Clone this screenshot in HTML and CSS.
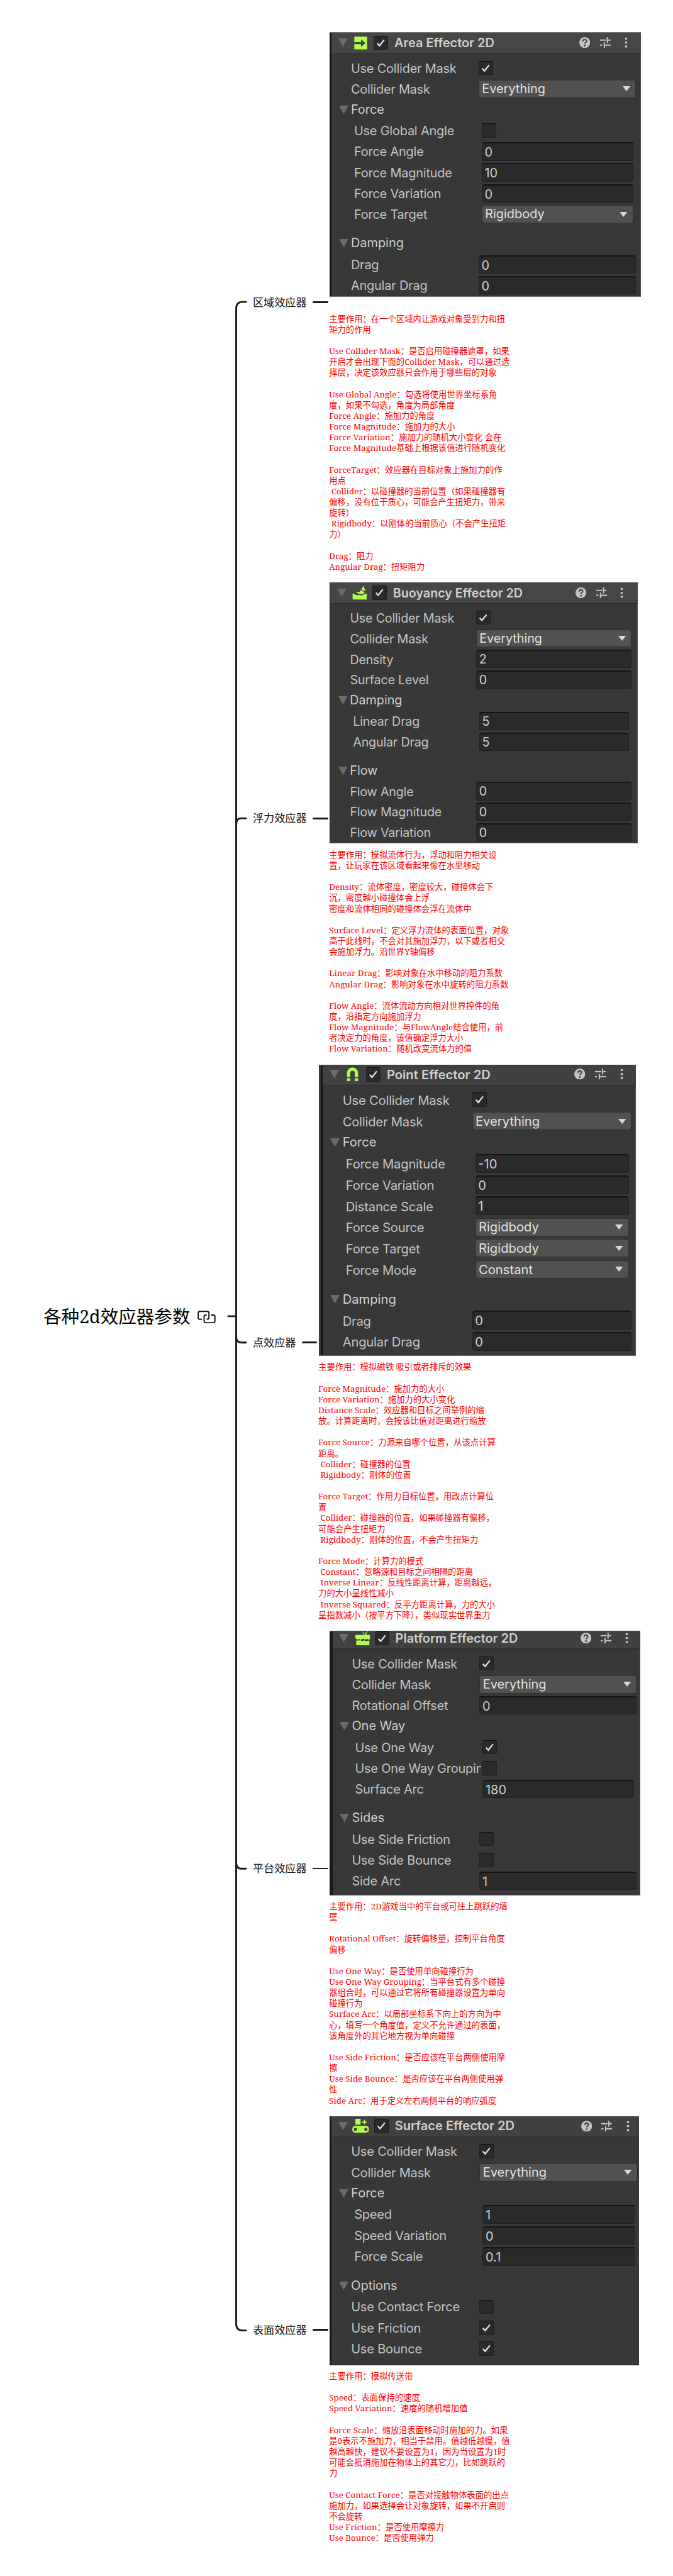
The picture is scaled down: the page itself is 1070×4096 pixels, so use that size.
FILE: index.html
```html
<!DOCTYPE html>
<html lang="zh-CN">
<head>
<meta charset="utf-8">
<title>各种2d效应器参数</title>
<link rel="stylesheet" href="styles.css">
</head>
<body>
<svg class="defs" width="0" height="0">
  <symbol id="check" viewBox="0 0 14 14"><path d="M3.2 7.2 5.6 9.9 10.6 3.6" fill="none" stroke="#e6e6e6" stroke-width="1.5"/></symbol>
  <symbol id="help" viewBox="0 0 10 10"><circle cx="5" cy="5" r="5" fill="#c4c4c4"/><path d="M3.4 3.9C3.4 1.6 6.7 1.7 6.7 3.7 6.7 4.8 5.1 4.8 5.1 6.1" fill="none" stroke="#414141" stroke-width="1.2"/><circle cx="5.1" cy="7.8" r=".8" fill="#414141"/></symbol>
  <symbol id="sliders" viewBox="0 0 10 10"><path d="M0 2.8H5.6M6.8 0V5.4M6.8 2.8H9.6M0 7.4H2M4 4.8V10M4 7.4H10" fill="none" stroke="#c4c4c4" stroke-width="1.2"/></symbol>
  <symbol id="dots" viewBox="0 0 3 10"><path d="M.5 .2h2v2h-2zM.5 4h2v2h-2zM.5 7.8h2v2h-2z" fill="#c4c4c4"/></symbol>
  <symbol id="area" viewBox="0 0 16 16"><rect x="2" y="2" width="12.2" height="12.2" rx=".6" fill="#b0ff4f"/><path d="M2 7.2H8.4V4.6L12.8 8.2 8.4 11.8V9.2H2z" fill="#3f4a35"/></symbol>
  <symbol id="buoy" viewBox="0 0 16 16"><path d="M11.3 1.4 13.5 6.2 9.3 5.8zM8.2 6 12.6 7.4 11.2 9.4Q7.2 9.6 4.4 8.2L6 7.2 8 7.6zM1 8.8 2.8 9.6Q5 11.4 7.4 10.2 10.6 11.6 12.4 9.4L14.6 9.2V14.8H1z" fill="#b0ff4f"/></symbol>
  <symbol id="magnet" viewBox="0 0 16 16"><path d="M4.3 10.4V6.6A3.7 3.7 0 0 1 11.7 6.6V10.4" fill="none" stroke="#b0ff4f" stroke-width="3"/><path d="M2.8 11.6h3v2.6h-3zM10.2 11.6h3v2.6h-3z" fill="#b0ff4f"/></symbol>
  <symbol id="platform" viewBox="0 0 16 16"><path d="M10.4 5 9 1.6M11.5 5 13.4 .8M11.4 5V2" stroke="#86bd45" stroke-width="1" fill="none"/><path d="M1.8 4.6H16V8.2L14.6 9.2 13 8.4 10.8 9 9 8.2 7.2 9.4 5 8.4 3.6 9.4 1.8 7.6zM2.6 10H5L6.6 9.6 8 10.6 10 9.8 12 10.6 15.2 10V14.4H2.6z" fill="#b0ff4f"/></symbol>
  <symbol id="surface" viewBox="0 0 16 16"><rect x="3" y="1.2" width="5" height="5.6" fill="#b0ff4f"/><path d="M9.3 3.7H11.2V2L13.8 4.3 11.2 6.6V4.9H9.3z" fill="#b0ff4f"/><rect y="8" width="16" height="6.4" rx="3" fill="#b0ff4f"/><circle cx="3" cy="11.2" r="1.5" fill="#3e3e3e"/><circle cx="13" cy="11.2" r="1.5" fill="#3e3e3e"/></symbol>
  <symbol id="tri" viewBox="0 0 9 8" preserveAspectRatio="none"><path d="M0 0H9L4.5 8z" fill="currentColor"/></symbol>
</svg>
<main class="map">
  <h1 class="root">各种2d效应器参数
    <svg class="root-link" viewBox="0 0 30 21"><path d="M7.4 14.2H3.6Q1.2 14.2 1.2 11.6V3.8Q1.2 1.2 3.8 1.2H16.4Q18.8 1.2 18.8 3.8V11.6Q18.8 14 16.6 14H15M22.4 7.2H26.2Q28.7 7.2 28.7 9.6V17.2Q28.7 19.8 26.2 19.8H13.4Q10.8 19.8 10.8 17.2V9.8Q10.8 7.2 13 7.2H15" fill="none" stroke="#111" stroke-width="2"/></svg>
  </h1>
  <svg class="trunk" viewBox="0 0 34 4096"><path d="M2 2092.9H14.5M30 480.1H24.5Q14.5 480.1 14.5 491V3695Q14.5 3705.6 24.5 3705.6H30M14.5 1311Q14.5 1301.1 23 1301.1H30M14.5 2125Q14.5 2134.8 23 2134.8H30M14.5 2961.4Q14.5 2971.3 23 2971.3H30"/></svg>
  <div class="branches">

    <section class="branch">
      <h2>区域效应器</h2><i class="link"></i>
      <div class="topic">
        <div class="panel p-area">
          <header><svg class="tri"><use href="#tri"/></svg><svg class="ico"><use href="#area"/></svg><b class="chk"><svg><use href="#check"/></svg></b><h3>Area Effector 2D</h3><svg class="help"><use href="#help"/></svg><svg class="sld"><use href="#sliders"/></svg><svg class="dots"><use href="#dots"/></svg></header>
          <div class="row"><label>Use Collider Mask</label><b class="chk"><svg><use href="#check"/></svg></b></div>
          <div class="row"><label>Collider Mask</label><div class="drop">Everything<svg><use href="#tri"/></svg></div></div>
          <div class="group"><svg class="tri"><use href="#tri"/></svg>Force</div>
          <div class="row in"><label>Use Global Angle</label><b class="chk"></b></div>
          <div class="row in"><label>Force Angle</label><div class="field">0</div></div>
          <div class="row in"><label>Force Magnitude</label><div class="field">10</div></div>
          <div class="row in"><label>Force Variation</label><div class="field">0</div></div>
          <div class="row in"><label>Force Target</label><div class="drop">Rigidbody<svg><use href="#tri"/></svg></div></div>
          <div class="group gap"><svg class="tri"><use href="#tri"/></svg>Damping</div>
          <div class="row"><label>Drag</label><div class="field">0</div></div>
          <div class="row"><label>Angular Drag</label><div class="field">0</div></div>
        </div>
        <div class="note">
主要作用：在一个区域内让游戏对象受到力和扭
矩力的作用

Use Collider Mask：是否启用碰撞器遮罩，如果
开启才会出现下面的Collider Mask，可以通过选
择层，决定该效应器只会作用于哪些层的对象

Use Global Angle：勾选将使用世界坐标系角
度，如果不勾选，角度为局部角度
Force Angle：施加力的角度
Force Magnitude：施加力的大小
Force Variation：施加力的随机大小变化 会在
Force Magnitude基础上根据该值进行随机变化

ForceTarget：效应器在目标对象上施加力的作
用点
 Collider：以碰撞器的当前位置（如果碰撞器有
偏移，没有位于质心，可能会产生扭矩力，带来
旋转）
 Rigidbody：以刚体的当前质心（不会产生扭矩
力）

Drag：阻力
Angular Drag：扭矩阻力</div>
      </div>
    </section>

    <section class="branch">
      <h2>浮力效应器</h2><i class="link"></i>
      <div class="topic">
        <div class="panel p-buoy">
          <header><svg class="tri"><use href="#tri"/></svg><svg class="ico"><use href="#buoy"/></svg><b class="chk"><svg><use href="#check"/></svg></b><h3>Buoyancy Effector 2D</h3><svg class="help"><use href="#help"/></svg><svg class="sld"><use href="#sliders"/></svg><svg class="dots"><use href="#dots"/></svg></header>
          <div class="row"><label>Use Collider Mask</label><b class="chk"><svg><use href="#check"/></svg></b></div>
          <div class="row"><label>Collider Mask</label><div class="drop">Everything<svg><use href="#tri"/></svg></div></div>
          <div class="row"><label>Density</label><div class="field">2</div></div>
          <div class="row"><label>Surface Level</label><div class="field">0</div></div>
          <div class="group"><svg class="tri"><use href="#tri"/></svg>Damping</div>
          <div class="row in"><label>Linear Drag</label><div class="field">5</div></div>
          <div class="row in"><label>Angular Drag</label><div class="field">5</div></div>
          <div class="group gap"><svg class="tri"><use href="#tri"/></svg>Flow</div>
          <div class="row"><label>Flow Angle</label><div class="field">0</div></div>
          <div class="row"><label>Flow Magnitude</label><div class="field">0</div></div>
          <div class="row"><label>Flow Variation</label><div class="field">0</div></div>
        </div>
        <div class="note">主要作用：模拟流体行为，浮动和阻力相关设
置，让玩家在该区域看起来像在水里移动

Density：流体密度，密度较大，碰撞体会下
沉，密度越小碰撞体会上浮
密度和流体相同的碰撞体会浮在流体中

Surface Level：定义浮力流体的表面位置，对象
高于此线时，不会对其施加浮力，以下或者相交
会施加浮力。沿世界Y轴偏移

Linear Drag：影响对象在水中移动的阻力系数
Angular Drag：影响对象在水中旋转的阻力系数

Flow Angle：流体流动方向相对世界控件的角
度，沿指定方向施加浮力
Flow Magnitude：与FlowAngle结合使用，前
者决定力的角度，该值确定浮力大小
Flow Variation：随机改变流体力的值</div>
      </div>
    </section>

    <section class="branch">
      <h2>点效应器</h2><i class="link"></i>
      <div class="topic">
        <div class="panel p-point">
          <header><svg class="tri"><use href="#tri"/></svg><svg class="ico"><use href="#magnet"/></svg><b class="chk"><svg><use href="#check"/></svg></b><h3>Point Effector 2D</h3><svg class="help"><use href="#help"/></svg><svg class="sld"><use href="#sliders"/></svg><svg class="dots"><use href="#dots"/></svg></header>
          <div class="row"><label>Use Collider Mask</label><b class="chk"><svg><use href="#check"/></svg></b></div>
          <div class="row"><label>Collider Mask</label><div class="drop">Everything<svg><use href="#tri"/></svg></div></div>
          <div class="group"><svg class="tri"><use href="#tri"/></svg>Force</div>
          <div class="row in"><label>Force Magnitude</label><div class="field">-10</div></div>
          <div class="row in"><label>Force Variation</label><div class="field">0</div></div>
          <div class="row in"><label>Distance Scale</label><div class="field">1</div></div>
          <div class="row in"><label>Force Source</label><div class="drop">Rigidbody<svg><use href="#tri"/></svg></div></div>
          <div class="row in"><label>Force Target</label><div class="drop">Rigidbody<svg><use href="#tri"/></svg></div></div>
          <div class="row in"><label>Force Mode</label><div class="drop">Constant<svg><use href="#tri"/></svg></div></div>
          <div class="group gap"><svg class="tri"><use href="#tri"/></svg>Damping</div>
          <div class="row"><label>Drag</label><div class="field">0</div></div>
          <div class="row"><label>Angular Drag</label><div class="field">0</div></div>
        </div>
        <div class="note">主要作用：模拟磁铁 吸引或者排斥的效果

Force Magnitude：施加力的大小
Force Variation：施加力的大小变化
Distance Scale：效应器和目标之间举例的缩
放。计算距离时，会按该比值对距离进行缩放

Force Source：力源来自哪个位置，从该点计算
距离。
 Collider：碰撞器的位置
 Rigidbody：刚体的位置

Force Target：作用力目标位置，用改点计算位
置
 Collider：碰撞器的位置，如果碰撞器有偏移，
可能会产生扭矩力
 Rigidbody：刚体的位置，不会产生扭矩力

Force Mode：计算力的模式
 Constant：忽略源和目标之间相隔的距离
 Inverse Linear：反线性距离计算，距离越远，
力的大小呈线性减小
 Inverse Squared：反平方距离计算，力的大小
呈指数减小（按平方下降），类似现实世界重力</div>
      </div>
    </section>

    <section class="branch">
      <h2>平台效应器</h2><i class="link"></i>
      <div class="topic">
        <div class="panel p-platform">
          <header><svg class="tri"><use href="#tri"/></svg><svg class="ico"><use href="#platform"/></svg><b class="chk"><svg><use href="#check"/></svg></b><h3>Platform Effector 2D</h3><svg class="help"><use href="#help"/></svg><svg class="sld"><use href="#sliders"/></svg><svg class="dots"><use href="#dots"/></svg></header>
          <div class="row"><label>Use Collider Mask</label><b class="chk"><svg><use href="#check"/></svg></b></div>
          <div class="row"><label>Collider Mask</label><div class="drop">Everything<svg><use href="#tri"/></svg></div></div>
          <div class="row"><label>Rotational Offset</label><div class="field">0</div></div>
          <div class="group"><svg class="tri"><use href="#tri"/></svg>One Way</div>
          <div class="row in"><label>Use One Way</label><b class="chk"><svg><use href="#check"/></svg></b></div>
          <div class="row in"><label>Use One Way Grouping</label><b class="chk"></b></div>
          <div class="row in"><label>Surface Arc</label><div class="field">180</div></div>
          <div class="group gap"><svg class="tri"><use href="#tri"/></svg>Sides</div>
          <div class="row"><label>Use Side Friction</label><b class="chk"></b></div>
          <div class="row"><label>Use Side Bounce</label><b class="chk"></b></div>
          <div class="row"><label>Side Arc</label><div class="field">1</div></div>
        </div>
        <div class="note">主要作用：2D游戏当中的平台或可往上跳跃的墙
壁

Rotational Offset：旋转偏移量，控制平台角度
偏移

Use One Way：是否使用单向碰撞行为
Use One Way Grouping：当平台式有多个碰撞
器组合时，可以通过它将所有碰撞器设置为单向
碰撞行为
Surface Arc：以局部坐标系下向上的方向为中
心，填写一个角度值，定义不允许通过的表面，
该角度外的其它地方视为单向碰撞

Use Side Friction：是否应该在平台两侧使用摩
擦
Use Side Bounce：是否应该在平台两侧使用弹
性
Side Arc：用于定义左右两侧平台的响应弧度</div>
      </div>
    </section>

    <section class="branch">
      <h2>表面效应器</h2><i class="link"></i>
      <div class="topic">
        <div class="panel p-surface">
          <header><svg class="tri"><use href="#tri"/></svg><svg class="ico"><use href="#surface"/></svg><b class="chk"><svg><use href="#check"/></svg></b><h3>Surface Effector 2D</h3><svg class="help"><use href="#help"/></svg><svg class="sld"><use href="#sliders"/></svg><svg class="dots"><use href="#dots"/></svg></header>
          <div class="row"><label>Use Collider Mask</label><b class="chk"><svg><use href="#check"/></svg></b></div>
          <div class="row"><label>Collider Mask</label><div class="drop">Everything<svg><use href="#tri"/></svg></div></div>
          <div class="group"><svg class="tri"><use href="#tri"/></svg>Force</div>
          <div class="row in"><label>Speed</label><div class="field">1</div></div>
          <div class="row in"><label>Speed Variation</label><div class="field">0</div></div>
          <div class="row in"><label>Force Scale</label><div class="field">0.1</div></div>
          <div class="group gap"><svg class="tri"><use href="#tri"/></svg>Options</div>
          <div class="row"><label>Use Contact Force</label><b class="chk"></b></div>
          <div class="row"><label>Use Friction</label><b class="chk"><svg><use href="#check"/></svg></b></div>
          <div class="row"><label>Use Bounce</label><b class="chk"><svg><use href="#check"/></svg></b></div>
        </div>
        <div class="note">主要作用：模拟传送带

Speed：表面保持的速度
Speed Variation：速度的随机增加值

Force Scale：缩放沿表面移动时施加的力。如果
是0表示不施加力，相当于禁用。值越低越慢，值
越高越快，建议不要设置为1，因为当设置为1时
可能会抵消施加在物体上的其它力，比如跳跃的
力

Use Contact Force：是否对接触物体表面的出点
施加力，如果选择会让对象旋转，如果不开启则
不会旋转
Use Friction：是否使用摩擦力
Use Bounce：是否使用弹力</div>
      </div>
    </section>

  </div>
</main>
</body>
</html>
```
FILE: styles.css
```css
* { box-sizing: border-box; }
body { margin: 0; background: #fff; }
h1, h2, h3 { margin: 0; font-weight: 400; }
svg { display: block; flex: none; }
.defs { position: absolute; }

.map {
  display: flex;
  align-items: flex-start;
  width: 1070px;
  height: 4096px;
  overflow: hidden;
  font-family: "Noto Serif", "Droid Serif", "Noto Sans CJK SC", serif;
  color: #111;
}
.root {
  display: flex;
  align-items: center;
  gap: 11.5px;
  width: 361px;
  height: 40px;
  margin-top: 2073px;
  padding-left: 69px;
  font-size: 28.57px;
  line-height: 40px;
  white-space: nowrap;
  color: #000;
}
.root-link { width: 29px; height: 20.3px; margin-top: 2px; }
.trunk { width: 34px; height: 4096px; }
.trunk path { fill: none; stroke: #1a1a1a; stroke-width: 2.9; stroke-linecap: round; }

.branches {
  display: flex;
  flex-direction: column;
  gap: 16.45px;
  padding: 51.1px 0 0 7px;
}
.branch { display: flex; align-items: center; }
.branch h2 { font-size: 17.14px; line-height: 24px; white-space: nowrap; }
.link {
  width: 24.6px;
  height: 2.9px;
  margin: 0 1.6px 0 9.4px;
  border-radius: 2px;
  background: #1a1a1a;
}
.note {
  margin-top: 9.5px;
  font-size: 13.33px;
  line-height: 17.143px;
  white-space: pre;
  color: #f00;
}

/* Inspector panels: every length is a multiple of the panel's unit --u */
.panel {
  --x: 0;
  --y: 0;
  --strip: 2;
  margin-left: .5px;
  overflow: hidden;
  background: linear-gradient(90deg, #191919 calc(var(--u) * var(--strip)), #383838 0);
  font: 400 calc(var(--u) * 12) / calc(var(--u) * 20) Inter, sans-serif;
  color: #c4c4c4;
  white-space: nowrap;
}
.p-area { --u: 1.661px; --y: .3; width: 494.8px; height: 420.8px; }
.p-buoy { --u: 1.642px; --x: -.7; --strip: .7; width: 490.2px; height: 415px; }
.p-point { --u: 1.685px; --x: 2; --y: -.8; --strip: 4; width: 504.3px; height: 463px; }
.p-platform { --u: 1.661px; --x: .9; --y: -2.8; --strip: 3; width: 494.2px; height: 420.3px; }
.p-surface { --u: 1.671px; --y: -.7; width: 491.8px; height: 395.4px; border-bottom: 1.5px solid #191919; }
.p-area, .p-buoy, .p-point, .p-platform { box-shadow: inset 0 1px #7c7c7c, inset 0 -1px #6c6c6c, inset -1px 0 #555; }
.p-point { background: linear-gradient(90deg, #383838 calc(var(--u) * 1.5), #191919 0, #191919 calc(var(--u) * 4), #383838 0); }

.panel header {
  display: flex;
  align-items: center;
  height: calc(var(--u) * 20.3);
  margin: calc(var(--u) * var(--y)) 0 calc(var(--u) * 3.7) calc(var(--u) * var(--strip));
  padding-left: calc(var(--u) * (8.4 + var(--x) - var(--strip)));
  border-bottom: 1px solid #2c2c2c;
  background: #414141;
}
.p-area header, .p-buoy header { background: #464646; }
.tri { width: calc(var(--u) * 9); height: calc(var(--u) * 8); color: #6b6b6b; }
.ico { width: calc(var(--u) * 16); height: calc(var(--u) * 16); margin: 0 calc(var(--u) * 4.6); }
.panel h3 {
  width: calc(var(--u) * 177);
  margin-left: calc(var(--u) * 6);
  padding-top: calc(var(--u) * .8);
  font-size: calc(var(--u) * 12);
  font-weight: 600;
  color: #d0d0d0;
}
.help, .sld { width: calc(var(--u) * 10.4); height: calc(var(--u) * 10.4); }
.sld { margin: 0 calc(var(--u) * 13.2) 0 calc(var(--u) * 9.3); }
.dots { width: calc(var(--u) * 3); height: calc(var(--u) * 10.4); }

.row, .group { display: flex; align-items: center; height: calc(var(--u) * 20); }
.row { padding-left: calc(var(--u) * (20.6 + var(--x))); }
.row.in { padding-left: calc(var(--u) * (23.6 + var(--x))); }
.row label {
  width: calc(var(--u) * 120.5);
  margin-right: calc(var(--u) * 1.7);
  overflow: hidden;
  padding-top: calc(var(--u) * 1.4);
  letter-spacing: -.01em;
}
.group { padding-left: calc(var(--u) * (9.2 + var(--x))); gap: calc(var(--u) * 2.4); color: #cfcfcf; }
.gap { margin-top: calc(var(--u) * 8); }
.chk {
  flex: none;
  width: calc(var(--u) * 13.7);
  height: calc(var(--u) * 13.7);
  border: 1px solid #1f1f1f;
  border-top-color: #0f0f0f;
  border-radius: calc(var(--u) * 1.6);
  background: #2a2a2a;
}
.chk svg { width: 100%; height: 100%; }
.field, .drop {
  flex: none;
  width: calc(var(--u) * 150.5);
  height: calc(var(--u) * 17.8);
  padding-left: calc(var(--u) * 2.2);
  border: 1px solid #212121;
  border-top: 2px solid #141414;
  border-radius: calc(var(--u) * 2.2);
  background: #2a2a2a;
  line-height: calc(var(--u) * 17);
  color: #d2d2d2;
}
.in .field, .in .drop { width: calc(var(--u) * 145); }
.drop {
  display: flex;
  justify-content: space-between;
  align-items: center;
  height: calc(var(--u) * 17.2);
  padding: 0 calc(var(--u) * 4.8) 0 calc(var(--u) * 2.6);
  border: 1px solid #303030;
  background: #515151;
  line-height: calc(var(--u) * 15);
  color: #e2e2e2;
}
.drop svg { width: calc(var(--u) * 7.4); height: calc(var(--u) * 4.8); color: #d8d8d8; }
```
